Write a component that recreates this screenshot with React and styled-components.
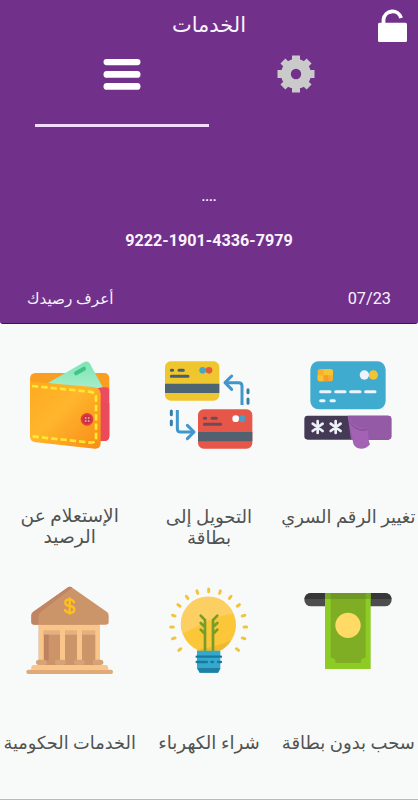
//Libs
import React from "react";
import styled, { createGlobalStyle } from "styled-components";

//Styles
const GlobalStyle = createGlobalStyle`
  * {
    box-sizing: border-box;
  }

  body {
    margin: 0;
    background-color: #f8faf9;
    font-family: Roboto, "DejaVu Sans", sans-serif;
  }
`;

const Screen = styled.main`
  display: flex;
  flex-direction: column;
  width: 418px;
  height: 800px;
  overflow: hidden;
  background-color: #f8faf9;
  border-bottom: 1px solid #b9bbba;
`;

const Header = styled.header`
  display: flex;
  flex-direction: column;
  flex: none;
  height: 324px;
  color: #fbf3ff;
  background-color: #71318a;
  border-bottom: 1px solid #4c0870;
  border-radius: 0 0 3px 3px;
`;

const TopBar = styled.div`
  display: grid;
  grid-template-columns: 1fr auto 1fr;
  height: 50px;
`;

const Title = styled.h1`
  grid-column: 2;
  margin: 9px 0 0;
  font-size: 21px;
  font-weight: 400;
  line-height: 33px;
  direction: rtl;
`;

const LockButton = styled.button`
  justify-self: end;
  align-self: start;
  width: 42px;
  height: 46px;
  padding: 0;
  border: 0;
  background: none;

  svg {
    display: block;
  }
`;

const Tabs = styled.nav`
  display: flex;
  height: 77px;
  padding: 0 35px;
`;

const Tab = styled.button`
  width: 174px;
  padding: 0;
  border: 0;
  border-bottom: 3px solid ${(props) => (props.$active ? "#f3dcff" : "transparent")};
  background: none;

  svg {
    display: block;
    margin: 0 auto 26px;
  }
`;

const Card = styled.section`
  display: flex;
  flex-direction: column;
  align-items: center;
  flex: 1;
  padding-top: 60px;
`;

const Holder = styled.p`
  margin: 0;
  font-size: 13px;
  font-weight: 700;
  line-height: 20px;
`;

const CardNumber = styled.p`
  margin: 23px 0 0;
  font-size: 16.2px;
  font-weight: 700;
  line-height: 22px;
`;

const CardFooter = styled.div`
  display: flex;
  justify-content: space-between;
  align-self: stretch;
  margin-top: 35px;
  padding: 0 27px;
  font-size: 16.3px;
  line-height: 24px;
`;

const Balance = styled.span`
  font-size: 15.2px;
  direction: rtl;
`;

const Services = styled.section`
  display: grid;
  grid-template-columns: repeat(3, 1fr);
  grid-auto-rows: 226px;
  padding-top: 26px;
  direction: rtl;
`;

const Service = styled.article`
  display: flex;
  flex-direction: column;
  align-items: center;
`;

const ServiceIcon = styled.svg`
  width: 110px;
  height: 110px;
  flex: none;
`;

const Label = styled.h2`
  margin: 46px 0 0;
  color: #505351;
  font-size: ${(props) => props.$size}px;
  font-weight: 400;
  line-height: 21px;
  text-align: center;
  white-space: pre;
`;

//Icons
const LockIcon = () => (
  <svg width="42" height="46" viewBox="0 0 42 46" fill="none">
    <path d="M7.500 24v-4.500a9 9 0 0 1 17.600-1.500" stroke="#fff" strokeWidth="3.800" />
    <rect x="2" y="22.800" width="29" height="19.200" rx="1.500" fill="#fff" />
  </svg>
);

const MenuIcon = () => (
  <svg width="38" height="40" viewBox="0 0 38 40" fill="#fff">
    <rect x=".5" y="5" width="37" height="6.200" rx="3.100" />
    <rect x=".5" y="17" width="37" height="6.800" rx="3.400" />
    <rect x=".5" y="29" width="37" height="6.800" rx="3.400" />
  </svg>
);

const GearIcon = () => (
  <svg width="38" height="40" viewBox="0 0 38 40">
    <g fill="#cbcacb">
      <rect x="15" y="1.500" width="8" height="37" />
      <rect x="15" y="1.500" width="8" height="37" transform="rotate(90 19 20)" />
      <rect x="15.500" y="1.500" width="7" height="37" transform="rotate(45 19 20)" />
      <rect x="15.500" y="1.500" width="7" height="37" transform="rotate(-45 19 20)" />
      <circle cx="19" cy="20" r="15" />
    </g>
    <circle cx="19" cy="20" r="5.200" fill="#71318a" />
  </svg>
);

const PinIcon = () => (
  <ServiceIcon viewBox="-5 0 330 330">
    <rect x="47" y="34" width="226" height="144" rx="25" fill="#3faccf" />
    <rect x="69" y="57" width="46" height="37" rx="8" fill="#fbad32" />
    <path d="M87 57h20q8 0 8 8v11H87zM69 76h18v18H77q-8 0-8-8z" fill="#f5c42f" />
    <path d="M87 76h14v18H87z" fill="#f39c2c" />
    <circle cx="236" cy="75" r="14" fill="#f2c333" />
    <circle cx="209" cy="75" r="14" fill="#eef2fa" />
    <path d="M78 125h28m17 0h28m17 0h28m17 0h28M78 152h10m21 0h10" stroke="#edf5fb" strokeWidth="9" strokeLinecap="round" />
    <rect x="29" y="197" width="261" height="72" rx="10" fill="#453a56" />
    <path d="M159 197h121q10 0 10 10v52q0 10-10 10H169z" fill="#955aa5" />
    <path d="M160 199c4 24 10 46 15 78 3 22 35 27 51 6-7-15-4-33-8-51-20 8-48-6-58-33z" fill="#a362b3" />
    <path d="M160 199c5 27 35 47 58 34l1 8c-24 7-49-6-57-32z" fill="#8a549b" />
    <path d="M69 213v36M54 221l30 22m0-22-30 22M123 213v36m-15-28 30 22m0-22-30 22" stroke="#edf0f7" strokeWidth="8" strokeLinecap="round" />
  </ServiceIcon>
);

const TransferIcon = () => (
  <ServiceIcon viewBox="-3 0 330 330" fill="none">
    <rect x="30" y="34" width="163" height="118" rx="17" fill="#f0c62e" />
    <path d="M30 101h163v28H30z" fill="#4d6572" />
    <path d="M49 61h4m19 0h13M49 79h50" stroke="#47606c" strokeWidth="9" strokeLinecap="round" />
    <circle cx="143" cy="61" r="10" fill="#45a9bd" />
    <circle cx="162" cy="61" r="10" fill="#e45b3f" />
    <rect x="129" y="178" width="163" height="118" rx="17" fill="#e75749" />
    <path d="M129 246h163v28H129z" fill="#52616f" />
    <path d="M148 205h4m19 0h13m-36 18h49" stroke="#704b54" strokeWidth="9" strokeLinecap="round" />
    <circle cx="261" cy="206" r="10" fill="#499fc2" />
    <circle cx="242" cy="206" r="10" fill="#fff" />
    <g stroke="#4096cd" strokeWidth="9">
      <path d="M261 165v-57q0-10-10-10h-38M67 180v56q0 10 10 10h37" />
      <path d="m230 78-20 20 20 20M97 226l20 20-20 20" strokeLinecap="round" strokeLinejoin="round" />
    </g>
    <path d="M279 119v9m0 19v13M49 183v11m0 19v11" stroke="#347ea8" strokeWidth="9" strokeLinecap="round" />
  </ServiceIcon>
);

const WalletIcon = () => (
  <ServiceIcon viewBox="-1 0 330 330">
    <defs>
      <linearGradient id="leather" x1="0" y1="0" x2="1" y2="1">
        <stop offset="0" stopColor="#fdaa22" />
        <stop offset=".45" stopColor="#ffb52c" />
        <stop offset="1" stopColor="#f98b17" />
      </linearGradient>
      <linearGradient id="note" x1="0" y1="0" x2="0" y2="1">
        <stop offset="0" stopColor="#7de3b4" />
        <stop offset="1" stopColor="#aaf0cd" />
      </linearGradient>
    </defs>
    <path d="M44 88q0-19 17-19h205q16 0 16 17v35H44z" fill="#f99e20" />
    <path d="M236 112h36q10 0 10 10v136q0 15-16 15h-30z" fill="#ed4b5e" />
    <path d="M237 150q31 12 45 10v98q0 15-16 15h-29z" fill="#e94b59" />
    <path d="M99 98 207 36q10-5 17 5l38 70-59 14z" fill="url(#note)" />
    <path d="m182 70 24-14" stroke="#42c489" strokeWidth="12" strokeLinecap="round" />
    <path d="M44 86q1 9 13 10l177 15q22 2 22 21v147q0 18-17 17L62 277q-18-2-18-19z" fill="url(#leather)" />
    <path d="M50 108 222 125q20 2 20 17v123q0 13-14 13L50 259" fill="none" stroke="#ffe92c" strokeWidth="8" strokeDasharray="19 9" />
    <circle cx="215" cy="208" r="19" fill="#e43c42" />
    <circle cx="215" cy="208" r="13" fill="#c53141" />
    <g fill="#f6a2a0">
      <circle cx="211" cy="204" r="3" />
      <circle cx="220" cy="204" r="3" />
      <circle cx="211" cy="213" r="3" />
      <circle cx="220" cy="213" r="3" />
    </g>
  </ServiceIcon>
);

const CashIcon = () => (
  <ServiceIcon viewBox="-5 -12 330 330">
    <rect x="29" y="39" width="262" height="40" rx="20" fill="#4d4d4e" />
    <path d="M29 57q2-18 20-18h222q18 0 20 18z" fill="#373738" />
    <path d="M91 39h137v228H91z" fill="#8ccc24" />
    <path d="M108 39h105v194q-18 2-14 16h-77q4-14-14-16z" fill="#7fae25" />
    <path d="M91 39h137v18H91z" fill="#77ab22" />
    <path d="M108 39h105v18H108z" fill="#6d9823" />
    <circle cx="160" cy="136" r="38" fill="#ffda65" />
  </ServiceIcon>
);

const rays = [-128, -108, -90, -72, -54, -36, -18, 0, 18, 36, 54, 72, 90, 108, 128];

const BulbIcon = () => (
  <ServiceIcon viewBox="-3 -12 330 330" fill="none">
    <g stroke="#f2c43b" strokeWidth="9" strokeLinecap="round">
      {rays.map((angle) => (
        <path key={angle} d="M161 27v8" transform={`rotate(${angle} 161 141)`} />
      ))}
    </g>
    <circle cx="161" cy="135" r="82" fill="#fbc638" />
    <path d="M83 162A82 82 0 1 1 236 101C174 108 119 143 83 162z" fill="#fbcf61" />
    <path d="M126 209Q182 202 229 181Q217 202 196 212L126 212z" fill="#f0b92d" />
    <path d="M150 214v-94l-13-13m0 22 13 12m-13 8 13 13M174 214v-94l13-13m0 22-13 12m13 8-13 13" stroke="#759d28" strokeWidth="8" strokeLinecap="round" />
    <path d="M126 212h70v54l-7 12h-55l-8-12z" fill="#34a9cd" />
    <path d="M128 264h68l-7 14h-55z" fill="#207fa5" />
    <path d="M125 230h73m-73 16h31m13 0h5m15 0h9" stroke="#1879a0" strokeWidth="7" strokeLinecap="round" />
  </ServiceIcon>
);

const BankIcon = () => (
  <ServiceIcon viewBox="-1 -12 330 330">
    <path d="M70 132h180v123H70z" fill="#cc9569" />
    <path d="M80 134h167v18H80z" fill="#fac58b" />
    <path d="M86 152h157v12H86z" fill="#e3b07e" />
    <path d="M86 164h14v77H86z" fill="#bd8260" />
    <path d="M71 134h14v107H71zM134 134h15v107h-15zM185 134h15v107h-15zM240 134h14v107h-14z" fill="#fac58b" />
    <path d="M156 23q7-5 15 0l104 73q5 4 5 11v19q0 8-9 8H57q-9 0-9-8v-19q0-7 5-11z" fill="#cc9569" />
    <path d="M156 23q7-5 15 0l-92 71q-10 8-10 16v24H57q-9 0-9-8v-19q0-7 5-11z" fill="#c08563" />
    <g fill="#d6a377">
      <rect x="62" y="239" width="32" height="16" rx="8" />
      <rect x="119" y="239" width="32" height="16" rx="8" />
      <rect x="176" y="239" width="32" height="16" rx="8" />
      <rect x="232" y="239" width="32" height="16" rx="8" />
    </g>
    <path d="M55 255h217q7 0 7 14H47q0-14 8-14z" fill="#fac58b" />
    <rect x="33" y="269" width="260" height="13" rx="6" fill="#dfaa78" />
    <path d="M176 67q-4-9-14-9-12 0-12 10 0 8 13 10 14 2 14 11t-14 9q-10 0-14-8m14-35v46" fill="none" stroke="#ffc01c" strokeWidth="7" strokeLinecap="round" />
  </ServiceIcon>
);

const services = [
  { label: "تغيير الرقم السري", icon: PinIcon, size: 17.9 },
  { label: "التحويل إلى\nبطاقة", icon: TransferIcon, size: 18.2 },
  { label: "الإستعلام عن\nالرصيد", icon: WalletIcon, size: 18.6 },
  { label: "سحب بدون بطاقة", icon: CashIcon, size: 18 },
  { label: "شراء الكهرباء", icon: BulbIcon, size: 18.2 },
  { label: "الخدمات الحكومية", icon: BankIcon, size: 17.8 },
];

export default function App() {
  return (
    <Screen>
      <GlobalStyle />
      <Header>
        <TopBar>
          <Title>الخدمات</Title>
          <LockButton aria-label="قفل">
            <LockIcon />
          </LockButton>
        </TopBar>
        <Tabs>
          <Tab $active>
            <MenuIcon />
          </Tab>
          <Tab>
            <GearIcon />
          </Tab>
        </Tabs>
        <Card>
          <Holder>....</Holder>
          <CardNumber>9222-1901-4336-7979</CardNumber>
          <CardFooter>
            <Balance>أعرف رصيدك</Balance>
            <span>07/23</span>
          </CardFooter>
        </Card>
      </Header>
      <Services>
        {services.map(({ label, icon: Icon, size }) => (
          <Service key={label}>
            <Icon />
            <Label $size={size}>{label}</Label>
          </Service>
        ))}
      </Services>
    </Screen>
  );
}
